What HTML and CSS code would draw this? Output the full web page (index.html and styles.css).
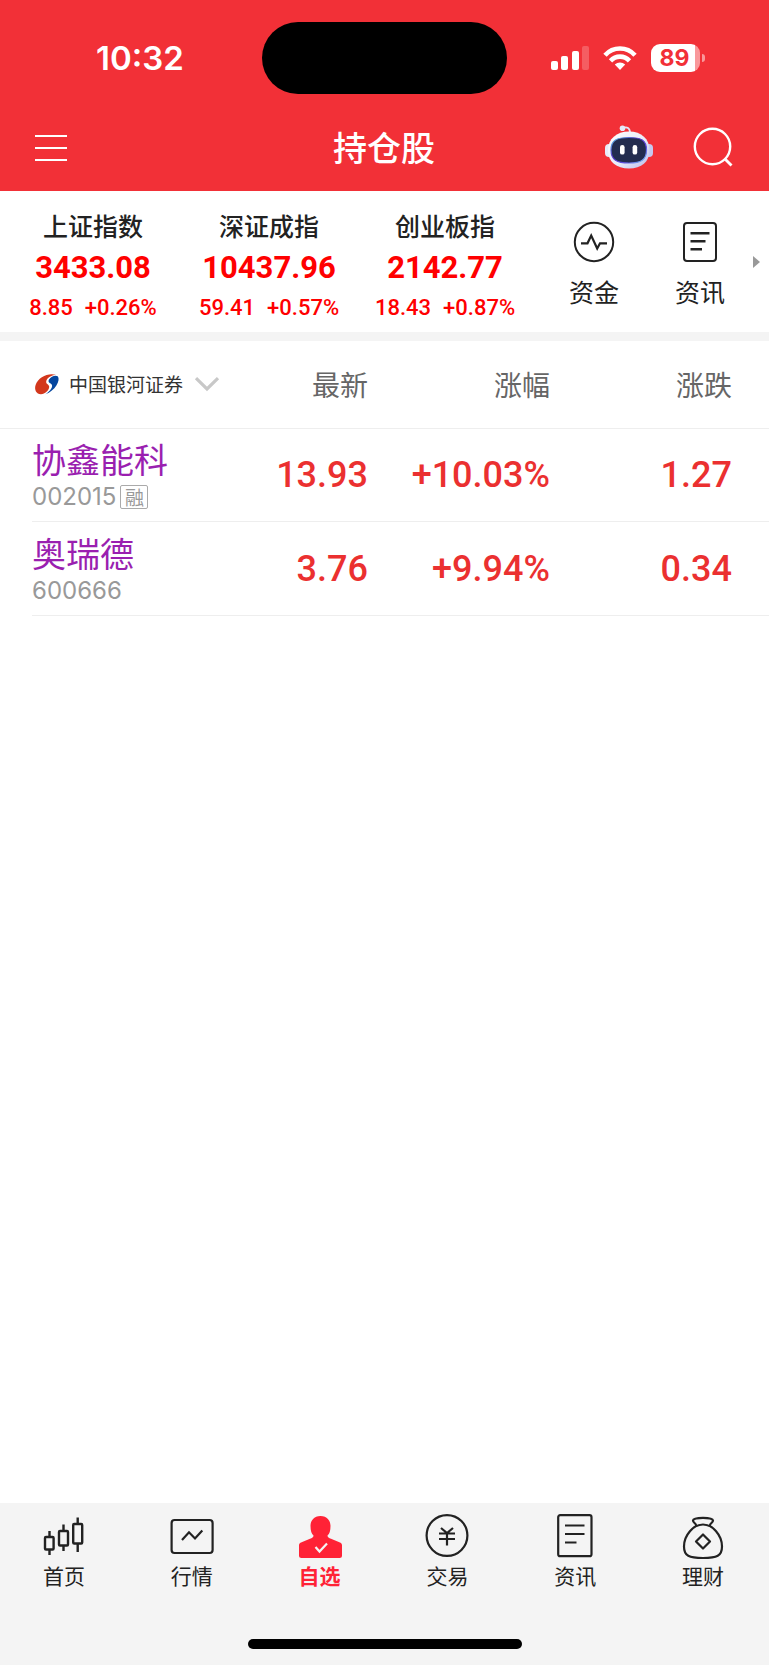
FILE: index.html
```
<!DOCTYPE html>
<html lang="zh-CN">
<head>
<meta charset="utf-8">
<meta name="viewport" content="width=device-width, initial-scale=1">
<title>持仓股</title>
<link rel="stylesheet" href="styles.css">
</head>
<body>
<div class="app">
  <header class="header">
    <div class="status">
      <time class="clock">10:32</time>
      <div class="island"></div>
      <div class="signals">
        <svg class="cell" viewBox="0 0 38 24" fill="#fff" aria-hidden="true">
          <rect x="0" y="15" width="7" height="9" rx="2"/>
          <rect x="10" y="10" width="7" height="14" rx="2"/>
          <rect x="21" y="5" width="7" height="19" rx="2"/>
          <rect x="31" y="0" width="7" height="24" rx="2" opacity=".22"/>
        </svg>
        <svg class="wifi" viewBox="0 0 34 24" fill="none" stroke="#fff" stroke-width="4.6" aria-hidden="true">
          <path d="M2 9.2C10.200 .3 23.800 .3 32 9.200"/>
          <path d="M7.500 14.800C12.800 9.200 21.200 9.200 26.500 14.800"/>
          <path d="M17 24L11.800 18.600C14.800 15.900 19.200 15.900 22.200 18.600Z" fill="#fff" stroke="none"/>
        </svg>
        <div class="battery"><span class="charge">89</span></div>
      </div>
    </div>
    <nav class="navbar">
      <button class="icon-btn menu" aria-label="菜单">
        <svg viewBox="0 0 32 27" stroke="#fff" stroke-width="2" aria-hidden="true"><path d="M0 2H32M0 14H32M0 26H32"/></svg>
      </button>
      <h1 class="title">持仓股</h1>
      <div class="actions">
        <button class="icon-btn robot" aria-label="智能助手">
          <svg viewBox="0 0 48 44" aria-hidden="true">
            <defs>
              <linearGradient id="shell" x1="0" y1="0" x2="1" y2="1"><stop offset="0" stop-color="#fff"/><stop offset=".55" stop-color="#e9ebf8"/><stop offset="1" stop-color="#b9bbea"/></linearGradient>
              <linearGradient id="rim" x1="0" y1="0" x2="1" y2="1"><stop offset="0" stop-color="#5cc8e8"/><stop offset=".4" stop-color="#5a35c8"/><stop offset=".7" stop-color="#5a50e0"/><stop offset="1" stop-color="#7fd0f5"/></linearGradient>
            </defs>
            <path d="M18 3C22 1.500 25 3 25 8" fill="none" stroke="#e4e4f6" stroke-width="1.800"/>
            <circle cx="17.500" cy="3.200" r="2.800" fill="#e4ebfa"/>
            <rect x="0" y="19" width="9" height="13" rx="4" fill="#e8eaf8"/>
            <rect x="39" y="19" width="9" height="13" rx="4" fill="#c6c8ee"/>
            <path d="M24 6.500C36.500 6.500 44.500 14 44.500 25C44.500 37 36.500 43.500 24 43.500S3 37 3 25C3 14 11.500 6.500 24 6.500Z" fill="url(#shell)"/>
            <path d="M24 12.500C36 12.500 41.500 15 41.500 25C41.500 35 36 38 24 38S6 35 6 25C6 15 12 12.500 24 12.500Z" fill="#232c4f" stroke="url(#rim)" stroke-width="1.200"/>
            <rect x="15" y="20" width="4.600" height="9.600" rx="2.200" fill="#fff"/>
            <rect x="27.600" y="20" width="4.600" height="9.600" rx="2.200" fill="#fff"/>
          </svg>
        </button>
        <button class="icon-btn search" aria-label="搜索">
          <svg viewBox="0 0 40 40" fill="none" stroke="#fff" stroke-width="2.400" aria-hidden="true"><circle cx="19.500" cy="19.500" r="17.700"/><path d="M31.500 31.500L38.500 38.500" stroke-width="2.800"/></svg>
        </button>
      </div>
    </nav>
  </header>

  <main class="content">
    <section class="indices">
      <a class="index" href="#sh"><span class="index-name">上证指数</span><span class="index-value">3433.08</span><span class="index-delta"><span>8.85</span><span>+0.26%</span></span></a>
      <a class="index" href="#sz"><span class="index-name">深证成指</span><span class="index-value">10437.96</span><span class="index-delta"><span>59.41</span><span>+0.57%</span></span></a>
      <a class="index" href="#cy"><span class="index-name">创业板指</span><span class="index-value">2142.77</span><span class="index-delta"><span>18.43</span><span>+0.87%</span></span></a>
      <a class="shortcut" href="#funds">
        <svg viewBox="0 0 42 42" fill="none" stroke="#222" stroke-width="2" aria-hidden="true"><circle cx="21" cy="21" r="19.200"/><path d="M8 22.300H14.500L18.200 14.500L24.200 27.500L27 22.300H34" stroke-width="2.200"/></svg>
        <span>资金</span>
      </a>
      <a class="shortcut" href="#news">
        <svg viewBox="0 0 42 42" fill="none" stroke="#222" stroke-width="2" aria-hidden="true"><rect x="5" y="2" width="32" height="38" rx="3"/><path d="M11.500 12.300H30.500M11.500 20.200H26.500M11.500 28.200H23" stroke-width="2.400"/></svg>
        <span>资讯</span>
      </a>
      <button class="icon-btn more" aria-label="更多"><svg viewBox="0 0 7 12" fill="#999" aria-hidden="true"><path d="M0 0L7 6L0 12Z"/></svg></button>
    </section>

    <table class="stocks">
      <thead>
        <tr>
          <th scope="col">
            <button class="broker">
              <svg class="broker-logo" viewBox="0 0 24 21" aria-hidden="true">
                <path d="M21 .8C13-1.500 3 3.500 .6 11C-1 16 1.500 20.300 6 20.200C10 20 14 16.500 14.200 13C14.300 10.300 10.800 10.500 11.200 7.500C11.600 4 16 1.500 21 .8Z" fill="#d3371c"/>
                <path d="M14 5.500C16 2 20.500 .8 22.700 2.200C26 6 20 17 10.500 20.200C15.500 17 18.500 12.500 16.500 10.300C15.200 8.800 12.500 8.500 14 5.500Z" fill="#05479f"/>
              </svg>
              <span>中国银河证券</span>
              <svg class="chevron" viewBox="0 0 24 14" fill="none" stroke="#c8c8c8" stroke-width="3.200" aria-hidden="true"><path d="M1 1.200L12 12L23 1.200"/></svg>
            </button>
          </th>
          <th scope="col">最新</th><th scope="col">涨幅</th><th scope="col">涨跌</th>
        </tr>
      </thead>
      <tbody>
        <tr>
          <td><div class="stock-name">协鑫能科</div><div class="stock-code"><span>002015</span><span class="tag">融</span></div></td>
          <td>13.93</td><td>+10.03%</td><td>1.27</td>
        </tr>
        <tr>
          <td><div class="stock-name">奥瑞德</div><div class="stock-code"><span>600666</span></div></td>
          <td>3.76</td><td>+9.94%</td><td>0.34</td>
        </tr>
      </tbody>
    </table>
  </main>

  <footer class="footer">
    <nav class="tabs">
      <a class="tab" href="#home">
        <svg viewBox="0 0 44 44" fill="none" stroke="#222" stroke-width="2.400" aria-hidden="true"><rect x="3" y="24" width="8.600" height="12.500" rx="1"/><path d="M7.500 18V24M7.500 36.500V42"/><rect x="17" y="18" width="9" height="14.500" rx="1"/><path d="M21.500 11.500V18M21.500 32.500V38"/><rect x="31.200" y="11" width="9" height="19.500" rx="1"/><path d="M35.700 4.500V11M35.700 30.500V39"/></svg>
        <span>首页</span>
      </a>
      <a class="tab" href="#market">
        <svg viewBox="0 0 44 44" fill="none" stroke="#222" stroke-width="2.200" aria-hidden="true"><rect x="1.600" y="7" width="41" height="33" rx="3"/><path d="M12 27L19 19.300L25 25.500L32.300 17.500"/></svg>
        <span>行情</span>
      </a>
      <a class="tab active" href="#watch" aria-current="page">
        <svg viewBox="0 0 44 44" fill="#ff2236" aria-hidden="true"><path d="M22.500 3C29 3 32.500 7.500 32.500 13C32.500 18 31.500 20.500 29.500 22.500C29.500 24.500 31 25 33 25.800L42 29.600C43.500 30.300 44 31 44 32.500V42.500Q44 45 41.500 45H3.500Q1 45 1 42.500V32.500C1 31 1.500 30.300 3 29.600L12 25.800C14 25 15.500 24.500 15.500 22.500C13.500 20.500 12.500 18 12.500 13C12.500 7.500 16 3 22.500 3Z"/><path d="M17.500 34L21.500 38.500L29 30.500" fill="none" stroke="#f4f4f4" stroke-width="2.200"/></svg>
        <span>自选</span>
      </a>
      <a class="tab" href="#trade">
        <svg viewBox="0 0 44 44" fill="none" stroke="#222" stroke-width="2.200" aria-hidden="true"><circle cx="22" cy="22.500" r="20.400"/><path d="M16 15L22 20L28 15M14 20.500H30M14 26H30M22 20V32.500"/></svg>
        <span>交易</span>
      </a>
      <a class="tab" href="#info">
        <svg viewBox="0 0 44 44" fill="none" stroke="#222" stroke-width="2.200" aria-hidden="true"><rect x="5.200" y="2.200" width="33.300" height="41" rx="2"/><path d="M12 12.500H31.500M12 21H31.500M12 29.500H23.500"/></svg>
        <span>资讯</span>
      </a>
      <a class="tab" href="#wealth">
        <svg viewBox="0 0 44 44" fill="none" stroke="#222" stroke-width="2.200" stroke-linejoin="round" aria-hidden="true"><path d="M15.500 13.500C14.800 9.500 12 10 12 7.500C12.500 4 31.500 4 32 7.500C32 10 29.200 9.500 28.500 13.500"/><path d="M22 11.500C31.500 11.500 41 22 41 33.500C41 43 36 45 22 45S3 43 3 33.500C3 22 12.500 11.500 22 11.500Z"/><path d="M22 21.500L29 28.500L22 35.500L15 28.500Z"/></svg>
        <span>理财</span>
      </a>
    </nav>
    <div class="home-bar"></div>
  </footer>
</div>
</body>
</html>
```
FILE: styles.css
```
* { box-sizing: border-box; }

body {
  margin: 0;
  background: #fff;
  color: #222;
  font-family: "Noto Sans CJK SC", sans-serif;
}

a { color: inherit; text-decoration: none; }
svg { display: block; overflow: visible; }

button {
  padding: 0;
  border: 0;
  background: none;
  color: inherit;
  font: inherit;
}

.app {
  display: flex;
  flex-direction: column;
  min-height: 100vh;
}

/* Header */
.header {
  background: #f23037;
  color: #fff;
}

.status {
  display: grid;
  grid-template-columns: 1fr auto 1fr;
  align-items: center;
  padding-top: 22px;
}

.clock {
  padding-left: 18px;
  text-align: center;
  font: 600 33px/40px Inter, sans-serif;
}

.island {
  width: 245px;
  height: 72px;
  border-radius: 36px;
  background: #000;
}

.signals {
  display: flex;
  align-items: center;
  gap: 14px;
  padding-left: 44px;
}

.cell { width: 38px; height: 24px; }
.wifi { width: 34px; height: 24px; }

.battery {
  position: relative;
  width: 49px;
  height: 28px;
  border-radius: 9px;
  background: linear-gradient(90deg, #fff 44px, #f9989b 44px);
}

.battery::after {
  content: "";
  position: absolute;
  top: 10px;
  right: -5px;
  width: 3px;
  height: 8px;
  border-radius: 0 4px 4px 0;
  background: #f9989b;
}

.charge {
  display: block;
  padding-right: 2px;
  color: #f23037;
  text-align: center;
  font: 700 23px/28px Inter, sans-serif;
}

.navbar {
  display: grid;
  grid-template-columns: 1fr auto 1fr;
  align-items: center;
  height: 97px;
  padding: 9px 36px 0 35px;
}

.menu svg { width: 32px; height: 27px; }

.title {
  margin: 0;
  font-size: 34px;
  font-weight: 500;
  line-height: 48px;
}

.actions {
  display: flex;
  align-items: center;
  justify-content: flex-end;
  gap: 40px;
}

.robot svg { width: 48px; height: 44px; }
.search svg { width: 40px; height: 40px; }

/* Index strip */
.content { flex: 1; }

.indices {
  display: grid;
  grid-template-columns: 176fr 176fr 176fr 122fr 90fr 24fr;
  align-items: center;
  height: 150px;
  padding-left: 5px;
  border-bottom: 9px solid #f4f4f4;
}

.index {
  display: flex;
  flex-direction: column;
  align-items: center;
  padding-top: 6px;
  color: #f00;
  font-family: Roboto, sans-serif;
  white-space: nowrap;
}

.index-name {
  color: #222;
  font: 500 25px/38px "Noto Sans CJK SC", sans-serif;
}

.index-value {
  font-size: 31px;
  font-weight: 700;
  line-height: 48px;
}

.index-delta {
  display: flex;
  gap: 12px;
  font-size: 22px;
  font-weight: 500;
  line-height: 32px;
}

.shortcut {
  display: flex;
  flex-direction: column;
  align-items: center;
  gap: 10px;
  padding-top: 6px;
  font-size: 25px;
  line-height: 36px;
}

.shortcut svg { width: 42px; height: 42px; }
.more { justify-self: end; padding-right: 9px; }
.more svg { width: 7px; height: 12px; }

/* Holdings */
.stocks {
  width: 100%;
  border-collapse: collapse;
  table-layout: fixed;
}

th, td {
  padding: 0;
  text-align: right;
  white-space: nowrap;
}

th:first-child, td:first-child { padding-left: 32px; text-align: left; }
th:nth-child(n + 2), td:nth-child(n + 2) { width: 182px; }
th:nth-child(2), td:nth-child(2) { width: 140px; }
th:last-child, td:last-child { width: 219px; padding-right: 37px; }

th {
  height: 87px;
  border-bottom: 1px solid #eee;
  color: #666;
  font-size: 28px;
  font-weight: 400;
}

td {
  height: 94px;
  background: linear-gradient(#eee, #eee) 0 bottom / 100% 1px no-repeat;
  color: #eb3030;
  font: 500 36px/44px Roboto, sans-serif;
}

td:first-child {
  padding-bottom: 2px;
  background-position: 32px bottom;
}

.broker {
  display: flex;
  align-items: center;
  color: #333;
  font-size: 19px;
  line-height: 28px;
}

.broker-logo { width: 24px; height: 21px; margin: 0 10px 0 3px; }
.chevron { width: 24px; height: 14px; margin-left: 12px; }

.stock-name {
  color: #9a1fb0;
  font: 400 34px/44px "Noto Sans CJK SC", sans-serif;
}

.stock-code {
  display: flex;
  align-items: center;
  gap: 4px;
  margin-top: 2px;
  color: #999;
  font: 400 24px/28px Inter, sans-serif;
}

.tag {
  width: 28px;
  height: 24px;
  border: 1px solid #aaa;
  border-radius: 2px;
  text-align: center;
  font: 400 19px/22px "Noto Sans CJK SC", sans-serif;
}

/* Bottom tabs */
.footer {
  padding: 10px 0 16px;
  background: #f4f4f4;
}

.tabs {
  display: grid;
  grid-template-columns: repeat(6, 1fr);
  padding-right: 2px;
}

.tab {
  display: flex;
  flex-direction: column;
  align-items: center;
  gap: 3px;
  font-size: 21px;
  line-height: 30px;
}

.tab svg { width: 44px; height: 44px; }
.active { color: #ff2236; font-weight: 700; }

.home-bar {
  width: 274px;
  height: 10px;
  margin: 49px auto 0;
  border-radius: 5px;
  background: #000;
}
```
